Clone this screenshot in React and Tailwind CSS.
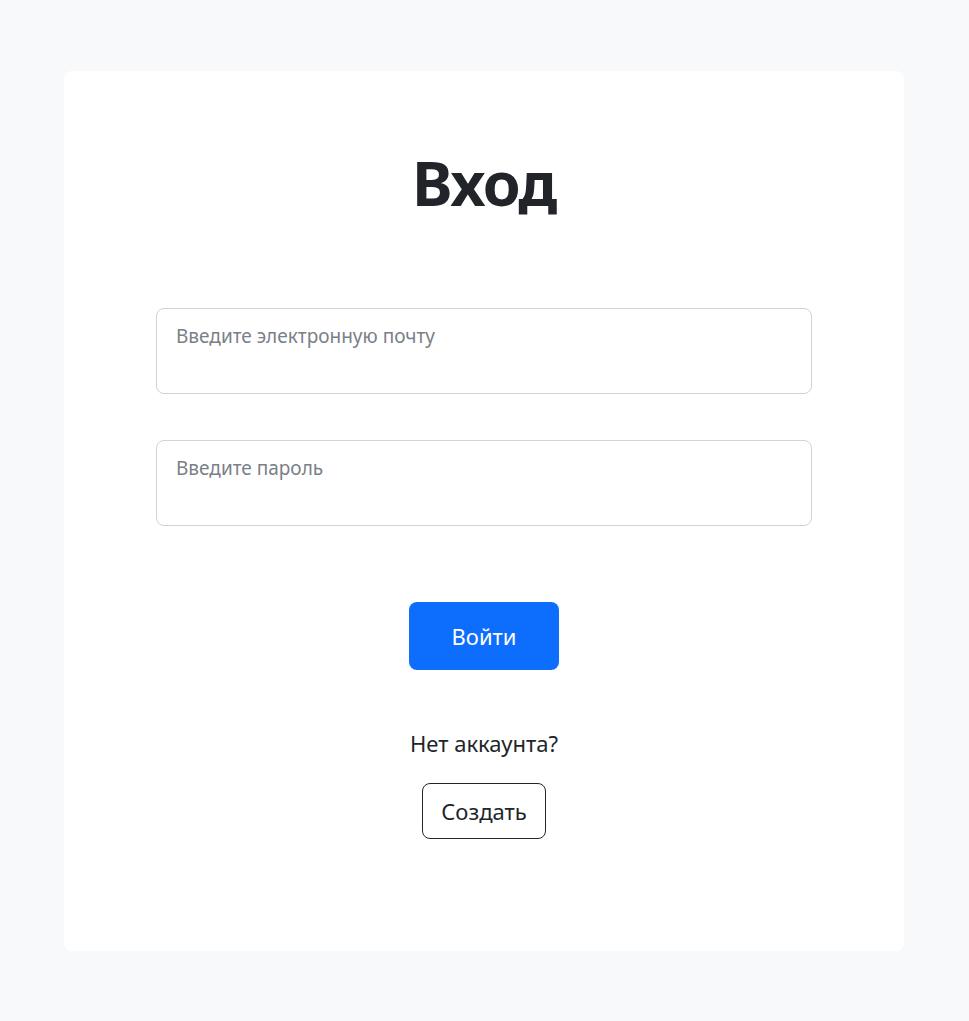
import React from "react";

export default function App() {
  return (
    <div
      className="min-h-screen bg-[#f8f9fa] pt-[71px] pb-[70px] pl-16 pr-[65px]"
      style={{ fontFamily: "'Noto Sans', 'Open Sans', sans-serif" }}
    >
      <div className="bg-white rounded-lg h-[880px] flex flex-col items-center pt-[72px]">
        {/* Title */}
        <h1 className="text-[61px] leading-[80px] font-bold text-[#212529] tracking-tight">
          Вход
        </h1>

        {/* Fields */}
        <form className="w-[656px] mt-[85px] flex flex-col gap-[46px]">
          <textarea
            rows={1}
            placeholder="Введите электронную почту"
            className="resize-none h-[86px] w-full rounded-lg border border-[#ced4da] px-[19px] py-[13px] text-[19px] leading-[28px] text-[#212529] placeholder:text-[#7a8087] outline-none"
          />
          <textarea
            rows={1}
            placeholder="Введите пароль"
            className="resize-none h-[86px] w-full rounded-lg border border-[#ced4da] px-[19px] py-[13px] text-[19px] leading-[28px] text-[#212529] placeholder:text-[#7a8087] outline-none"
          />
        </form>

        {/* Submit */}
        <button className="mt-[76px] w-[150px] h-[68px] rounded-lg bg-[#0d6efd] text-white text-[22px]">
          Войти
        </button>

        {/* Register */}
        <p className="mt-[57px] text-[22px] leading-[32px] text-[#212529]">Нет аккаунта?</p>
        <button className="mt-[24px] w-[124px] h-[56px] rounded-lg border border-[#212529] text-[22px] text-[#212529]">
          Создать
        </button>
      </div>
    </div>
  );
}
